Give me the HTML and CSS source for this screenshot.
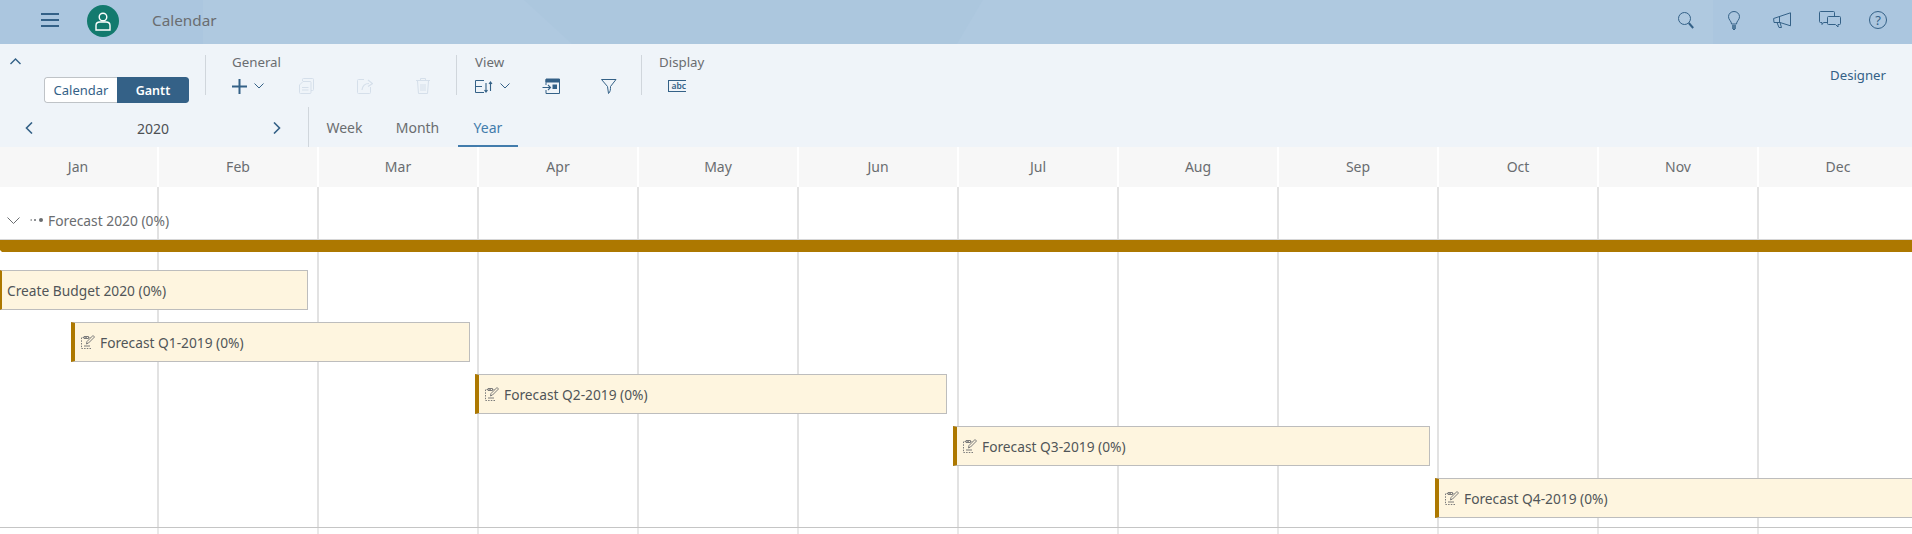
FILE: index.html
```html
<!DOCTYPE html>
<html lang="en">
<head>
<meta charset="utf-8">
<title>Calendar</title>
<link rel="stylesheet" href="styles.css">
</head>
<body>
<header class="shell">
  <div class="shell-left">
    <svg class="burger" width="18" height="14" viewBox="0 0 18 14"><path d="M0 1h18M0 7h18M0 13h18" stroke="#346187" stroke-width="2"/></svg>
    <div class="avatar"><svg width="16" height="19" viewBox="0 0 16 19" fill="none" stroke="#fff" stroke-width="1.4"><circle cx="8" cy="5" r="3.8"/><path d="M1 18v-4.5C1 11 3 10 5 10h6c2 0 4 1 4 3.5V18z"/></svg></div>
    <span class="app-title">Calendar</span>
  </div>
  <div class="shell-right">
    <svg width="16" height="17" viewBox="0 0 16 17" fill="none" stroke="#346187"><circle cx="6.5" cy="6.5" r="6"/><path d="M10.8 11l4.4 5" stroke-width="2"/></svg>
    <svg class="ic-bulb" width="12" height="19" viewBox="0 0 12 19" fill="none" stroke="#346187"><path d="M3.5 13C3.5 10 .5 9 .5 5.7a5.500 5.200 0 0 1 11 0C11.5 9 8.5 10 8.5 13z"/><path d="M4 15h4M4 17h4" stroke-width="1.5"/><path d="M5 18.5h2"/></svg>
    <svg class="ic-mega" width="18" height="16" viewBox="0 0 18 16" fill="none" stroke="#346187"><path d="M17.5 .8v13L7 10.500H1L.6 6.500z"/><path d="M4 10.500l2 5h2.500L7 10.500"/><path d="M6.500 4.500v6"/></svg>
    <svg class="ic-chat" width="22" height="18" viewBox="0 0 22 18" fill="none" stroke="#346187"><path d="M8 11.500H4.500L3 13.500v-2H1.500A1 1 0 0 1 .5 10.500V1.500a1 1 0 0 1 1-1h13a1 1 0 0 1 1 1V5"/><path d="M9.500 5.500h11a1 1 0 0 1 1 1v6a1 1 0 0 1-1 1H19v2.500L16.500 13.500h-7a1 1 0 0 1-1-1v-6a1 1 0 0 1 1-1z"/></svg>
    <div class="ic-help">?</div>
  </div>
</header>

<section class="toolbar">
  <div class="ribbon">
    <div class="collapse-col">
      <svg class="collapse" width="11" height="7" viewBox="0 0 11 7" fill="none" stroke="#346187" stroke-width="1.4"><path d="M.5 6L5.500 1l5 5"/></svg>
      <div class="segmented">
        <span class="seg">Calendar</span>
        <span class="seg seg-on">Gantt</span>
      </div>
    </div>
    <div class="group group-general">
      <div class="group-label">General</div>
      <div class="group-tools">
        <svg class="plus" width="15" height="15" viewBox="0 0 15 15"><path d="M7.500 0v15M0 7.500h15" stroke="#346187" stroke-width="2"/></svg>
        <svg class="chev" width="10" height="6" viewBox="0 0 10 6" fill="none" stroke="#346187"><path d="M.5 .5L5 5 9.500 .5"/></svg>
        <svg class="t-copy" width="15" height="16" viewBox="0 0 15 16" fill="none" stroke="#d5dfea"><path d="M3.500 3V1.500A1 1 0 0 1 4.500 .5h9a1 1 0 0 1 1 1v10a1 1 0 0 1-1 1H12"/><path d="M4 3.500h7.500a1 1 0 0 1 .5 1v10a1 1 0 0 1-1 1H1.500a1 1 0 0 1-1-1V7z"/><path d="M3 9.500h6.500M3 12h6.500"/></svg>
        <svg class="t-share" width="16" height="16" viewBox="0 0 16 16" fill="none" stroke="#d5dfea"><path d="M13.500 9v5.500a1 1 0 0 1-1 1h-11a1 1 0 0 1-1-1v-12a1 1 0 0 1 1-1H7"/><path d="M5 12c.5-4 3-6.500 7-6.500M11 2l4.500 3.500L11 8.500" stroke-width="1.2"/></svg>
        <svg class="t-trash" width="14" height="16" viewBox="0 0 14 16" fill="none" stroke="#d5dfea"><path d="M0 2.500h14M4.500 2.500V.5h5v2"/><path d="M1.500 3l1 12.500h9l1-12.500M5 6v7M7 6v7M9 6v7"/></svg>
      </div>
    </div>
    <div class="group group-view">
      <div class="group-label">View</div>
      <div class="group-tools">
        <svg class="t-sort" width="18" height="13" viewBox="0 0 18 13" fill="none" stroke="#346187"><path d="M9 .5H.5v12H9M.5 6.500H7"/><path d="M11 3v9M9.500 10l1.500 2 1.500-2M15.500 11V2M14 4l1.500-2L17 4" stroke-width="1.1"/></svg>
        <svg class="chev" width="10" height="6" viewBox="0 0 10 6" fill="none" stroke="#346187"><path d="M.5 .5L5 5 9.500 .5"/></svg>
        <svg class="t-cal" width="18" height="16" viewBox="0 0 18 16" fill="none" stroke="#346187"><path d="M4 7V1.500h13.500v14H4V12"/><path d="M4 1h13.500v3H4z" fill="#346187"/><path d="M.5 9.500H8M6 7l2.500 2.500L6 12" stroke-width="1.1"/><rect x="10.500" y="6.500" width="4.500" height="4.500" fill="#346187" stroke="none"/></svg>
        <svg class="t-filter" width="16" height="15" viewBox="0 0 16 15" fill="none" stroke="#346187"><path d="M.5 .5h14.500L9.500 7.500c0 3 0 5-2 7L6.500 7.500z"/></svg>
      </div>
    </div>
    <div class="group group-display">
      <div class="group-label">Display</div>
      <div class="group-tools">
        <div class="t-abc">abc</div>
      </div>
    </div>
    <div class="designer">Designer</div>
  </div>
  <div class="navrow">
    <div class="pager">
      <svg width="8" height="12" viewBox="0 0 8 12" fill="none" stroke="#346187" stroke-width="1.6"><path d="M7 .5L1.500 6 7 11.500"/></svg>
      <span class="year">2020</span>
      <svg width="8" height="12" viewBox="0 0 8 12" fill="none" stroke="#346187" stroke-width="1.6"><path d="M1 .5L6.500 6 1 11.500"/></svg>
    </div>
    <nav class="tabs">
      <span class="tab">Week</span>
      <span class="tab">Month</span>
      <span class="tab tab-on">Year</span>
    </nav>
  </div>
</section>

<div class="months">
  <span class="month">Jan</span><span class="month">Feb</span><span class="month">Mar</span><span class="month">Apr</span><span class="month">May</span><span class="month">Jun</span><span class="month">Jul</span><span class="month">Aug</span><span class="month">Sep</span><span class="month">Oct</span><span class="month">Nov</span><span class="month">Dec</span>
</div>

<main class="chart">
  <div class="summary-row">
    <svg width="13" height="7" viewBox="0 0 13 7" fill="none" stroke="#6a6d70"><path d="M.5 .5l6 6 6-6"/></svg>
    <svg class="dots" width="14" height="4" viewBox="0 0 14 4" fill="#6a6d70"><circle cx="1.2" cy="2" r=".8"/><circle cx="5" cy="2" r="1"/><circle cx="11" cy="2" r="2"/></svg>
    <span>Forecast 2020 (0%)</span>
  </div>
  <div class="summary-bar"></div>
  <div class="task task-1">Create Budget 2020 (0%)</div>
  <div class="task task-2"><svg class="note" width="14" height="14" viewBox="0 0 14 14" fill="none" stroke="#7b7b7b"><path d="M10 13.500H.5v-11H10" stroke-dasharray="1.5 1.2"/><path d="M3 1.500h4.500v2H3zM5.500 9l.5-2.500 6-6 1.500 1.500-6 6zM3 11h6"/></svg>Forecast Q1-2019 (0%)</div>
  <div class="task task-3"><svg class="note" width="14" height="14" viewBox="0 0 14 14" fill="none" stroke="#7b7b7b"><path d="M10 13.500H.5v-11H10" stroke-dasharray="1.5 1.2"/><path d="M3 1.500h4.500v2H3zM5.500 9l.5-2.500 6-6 1.500 1.500-6 6zM3 11h6"/></svg>Forecast Q2-2019 (0%)</div>
  <div class="task task-4"><svg class="note" width="14" height="14" viewBox="0 0 14 14" fill="none" stroke="#7b7b7b"><path d="M10 13.500H.5v-11H10" stroke-dasharray="1.5 1.2"/><path d="M3 1.500h4.500v2H3zM5.500 9l.5-2.500 6-6 1.500 1.500-6 6zM3 11h6"/></svg>Forecast Q3-2019 (0%)</div>
  <div class="task task-5"><svg class="note" width="14" height="14" viewBox="0 0 14 14" fill="none" stroke="#7b7b7b"><path d="M10 13.500H.5v-11H10" stroke-dasharray="1.5 1.2"/><path d="M3 1.500h4.500v2H3zM5.500 9l.5-2.500 6-6 1.500 1.500-6 6zM3 11h6"/></svg>Forecast Q4-2019 (0%)</div>
</main>
<div class="chart-foot"></div>
</body>
</html>
```
FILE: styles.css
```css
* { box-sizing: border-box; }
html, body { margin: 0; height: 534px; overflow: hidden; }
body { font-family: "Noto Sans", "Open Sans", sans-serif; font-size: 14px; color: #32363a; background: #fff; width: 1912px; }
svg { display: block; flex: none; }

.shell { height: 44px; padding-bottom: 4px; position: relative; display: flex; justify-content: space-between; align-items: center; background: linear-gradient(90deg, #abc6df 203px, #afc9e0 203px, #afc9e0 1713px, #abc6df 1713px); }
.shell::before { content: ""; position: absolute; top: 0; left: 524px; width: 459px; height: 44px; background: #acc7de; clip-path: polygon(0 0, 100% 0, 433px 100%, 48px 100%); }
.shell-left, .shell-right { position: relative; }
.shell-left { display: flex; align-items: center; padding-left: 41px; }
.avatar { width: 32px; height: 32px; border-radius: 50%; background: #137a6e; margin: 2px 0 0 28px; display: flex; align-items: center; justify-content: center; }
.app-title { margin-left: 33px; color: #6a6d70; font-size: 15.3px; }
.shell-right { display: flex; align-items: center; padding-right: 25px; }
.ic-bulb { margin-left: 34px; }
.ic-mega { margin-left: 33px; }
.ic-chat { margin-left: 28px; }
.ic-help { margin-left: 28px; width: 18px; height: 18px; border: 1px solid #346187; border-radius: 50%; color: #346187; font-size: 13px; line-height: 16px; text-align: center; }

.toolbar { height: 103px; background: #eff4f9; }
.ribbon { height: 63px; display: flex; }
.collapse-col { width: 205px; padding: 14px 0 0 10px; flex: none; }
.segmented { display: flex; width: 145px; height: 26px; margin: 12px 0 0 34px; border-radius: 3px; font-size: 13px; overflow: hidden; }
.seg { width: 73px; background: #fff; border: 1px solid #bfc3c7; border-right: 0; border-radius: 3px 0 0 3px; color: #346187; display: flex; align-items: center; justify-content: center; }
.seg-on { width: 72px; background: #346187; border: 0; border-radius: 0 3px 3px 0; color: #fff; font-size: 12.5px; font-weight: 600; }
.group { border-left: 1px solid #d0d6dc; margin-top: 11px; height: 40px; flex: none; }
.group-label { font-size: 13.3px; color: #6a6d70; line-height: 18px; margin-top: -2px; }
.group-tools { display: flex; align-items: center; height: 22px; margin-top: 4px; }
.group-general { width: 251px; padding-left: 26px; }
.group-view { width: 185px; padding-left: 18px; }
.group-display { padding-left: 17px; }
.chev { margin-left: 7px; }
.t-copy { margin-left: 35px; }
.t-share { margin-left: 43px; }
.t-trash { margin-left: 43px; }
.t-cal { margin-left: 32px; }
.t-filter { margin-left: 41px; }
.t-abc { margin-left: 9px; width: 18px; height: 12px; border: 1px solid #346187; border-width: 1px 0 1px 1px; color: #346187; font-size: 8.5px; line-height: 10px; font-weight: 600; text-align: right; white-space: nowrap; }
.designer { margin-left: auto; margin-right: 26px; margin-top: 21px; font-size: 13.2px; color: #346187; line-height: 20px; }

.navrow { height: 40px; display: flex; }
.pager { width: 309px; display: flex; align-items: center; justify-content: space-between; padding: 2px 27px 0 25px; border-right: 1px solid #d0d6dc; color: #4d5054; }
.year { font-size: 14px; }
.tabs { display: flex; margin-left: -1px; }
.tab { width: 73px; height: 40px; color: #6a6d70; font-size: 14px; display: flex; align-items: center; justify-content: center; }
.tab-on { width: 60px; margin-left: 4px; color: #427cac; box-shadow: inset 0 -2px 0 #427cac; }

.months { height: 40px; display: flex; background: #f7f7f7; margin-left: -1px; }
.month { width: 160px; flex: none; text-align: center; line-height: 40px; color: #6a6d70; font-size: 14px; border-right: 2px solid #fff; }

.chart, .chart-foot { background-image: repeating-linear-gradient(90deg, #fff 0, #fff 157px, #e2e2e2 157px, #e2e2e2 159px, #fff 159px, #fff 160px); }
.chart { height: 341px; overflow: hidden; border-bottom: 1px solid #c5c5c5; }
.chart-foot { height: 6px; opacity: .75; background-color: #f2f2f2; }
.summary-row { height: 52px; padding: 14px 0 0 7px; display: flex; align-items: center; color: #6a6d70; font-size: 13.8px; }
.dots { margin-left: 10px; margin-right: 4px; }
.summary-bar { height: 13px; background: #ad7800; border-top: 1px solid #d6d6d6; clip-path: polygon(0 0, 100% 0, 100% 100%, 2px 100%, 0 calc(100% - 2px)); }
.task { height: 40px; margin-top: 12px; display: flex; align-items: center; background: #fef5df; border: 1px solid #bdbdbd; border-left: 4px solid #ad7800; color: #515558; font-size: 13.75px; padding-left: 6px; white-space: nowrap; }
.note { margin-right: 5px; }
.task-1 { width: 308px; margin-top: 18px; padding-left: 5px; border-left-width: 2px; }
.task-2 { width: 399px; margin-left: 71px; }
.task-3 { width: 472px; margin-left: 475px; }
.task-4 { width: 477px; margin-left: 953px; }
.task-5 { width: 480px; margin-left: 1435px; }
```
